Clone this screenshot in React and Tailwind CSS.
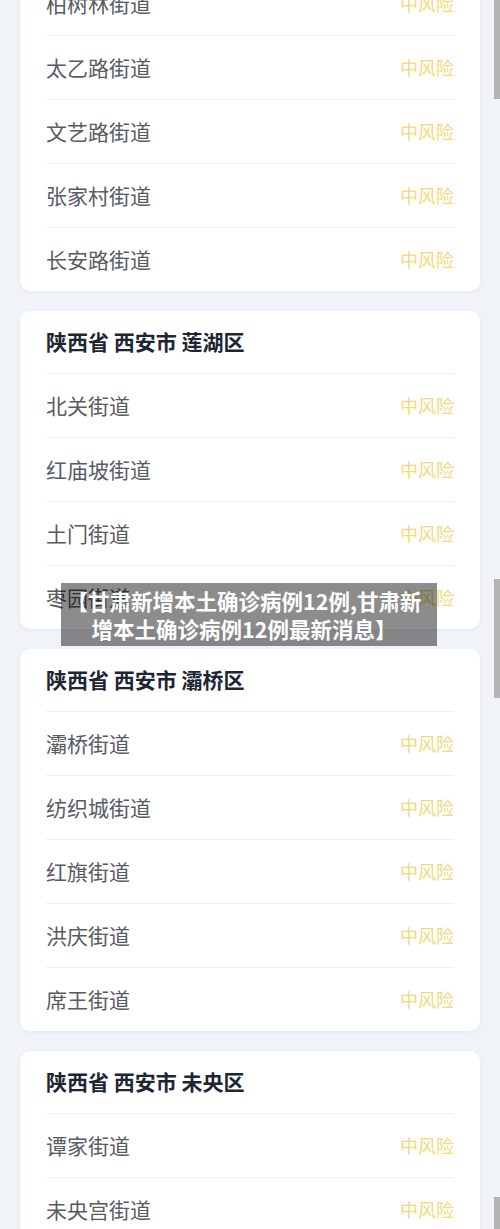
import React from "react";

const cards = [
  {
    header: null,
    rows: ["柏树林街道", "太乙路街道", "文艺路街道", "张家村街道", "长安路街道"],
    offset: true,
  },
  {
    header: "陕西省 西安市 莲湖区",
    rows: ["北关街道", "红庙坡街道", "土门街道", "枣园街道"],
  },
  {
    header: "陕西省 西安市 灞桥区",
    rows: ["灞桥街道", "纺织城街道", "红旗街道", "洪庆街道", "席王街道"],
  },
  {
    header: "陕西省 西安市 未央区",
    rows: ["谭家街道", "未央宫街道", "汉城街道"],
  },
];

function Card({ header, rows, offset }) {
  return (
    <div
      className={
        "bg-white rounded-[10px] px-[26px] shadow-[0_1px_4px_rgba(30,50,90,0.05)] " +
        (offset ? "-mt-[29px]" : "")
      }
    >
      {header && (
        <div className="h-[62px] flex items-center text-[21px] font-bold text-[#1c2635]">
          {header}
        </div>
      )}
      {rows.map((r) => (
        <div
          key={r}
          className="h-[64px] border-t border-[#eceef1] flex items-center justify-between"
        >
          <span className="text-[21px] text-[#575b62]">{r}</span>
          <span className="text-[18px] text-[#f1d97c]">中风险</span>
        </div>
      ))}
    </div>
  );
}

export default function App() {
  return (
    <div
      className="relative w-[500px] h-[1229px] overflow-hidden bg-[#f0f3f8]"
      style={{ fontFamily: '"Noto Sans CJK SC", "Noto Sans", sans-serif' }}
    >
      <div className="flex flex-col gap-5 pl-5 pr-5">
        {cards.map((c, i) => (
          <Card key={i} {...c} />
        ))}
      </div>

      {/* scrollbar fragments */}
      <div className="absolute right-0 top-0 w-[6px] h-[99px] bg-[#b5b5b5]" />
      <div className="absolute right-0 top-[579px] w-[6px] h-[119px] bg-[#b5b5b5]" />
      <div className="absolute right-0 top-[1197px] w-[6px] h-[32px] bg-[#b5b5b5]" />

      {/* caption overlay */}
      <div className="absolute left-[61px] top-[583px] w-[376px] h-[63px] bg-black/45 flex items-center justify-center pr-[10px]">
        <p className="text-white font-bold text-[21.5px] leading-[28px] text-center whitespace-nowrap">
          【甘肃新增本土确诊病例12例,甘肃新
          <br />
          增本土确诊病例12例最新消息】
        </p>
      </div>
    </div>
  );
}
